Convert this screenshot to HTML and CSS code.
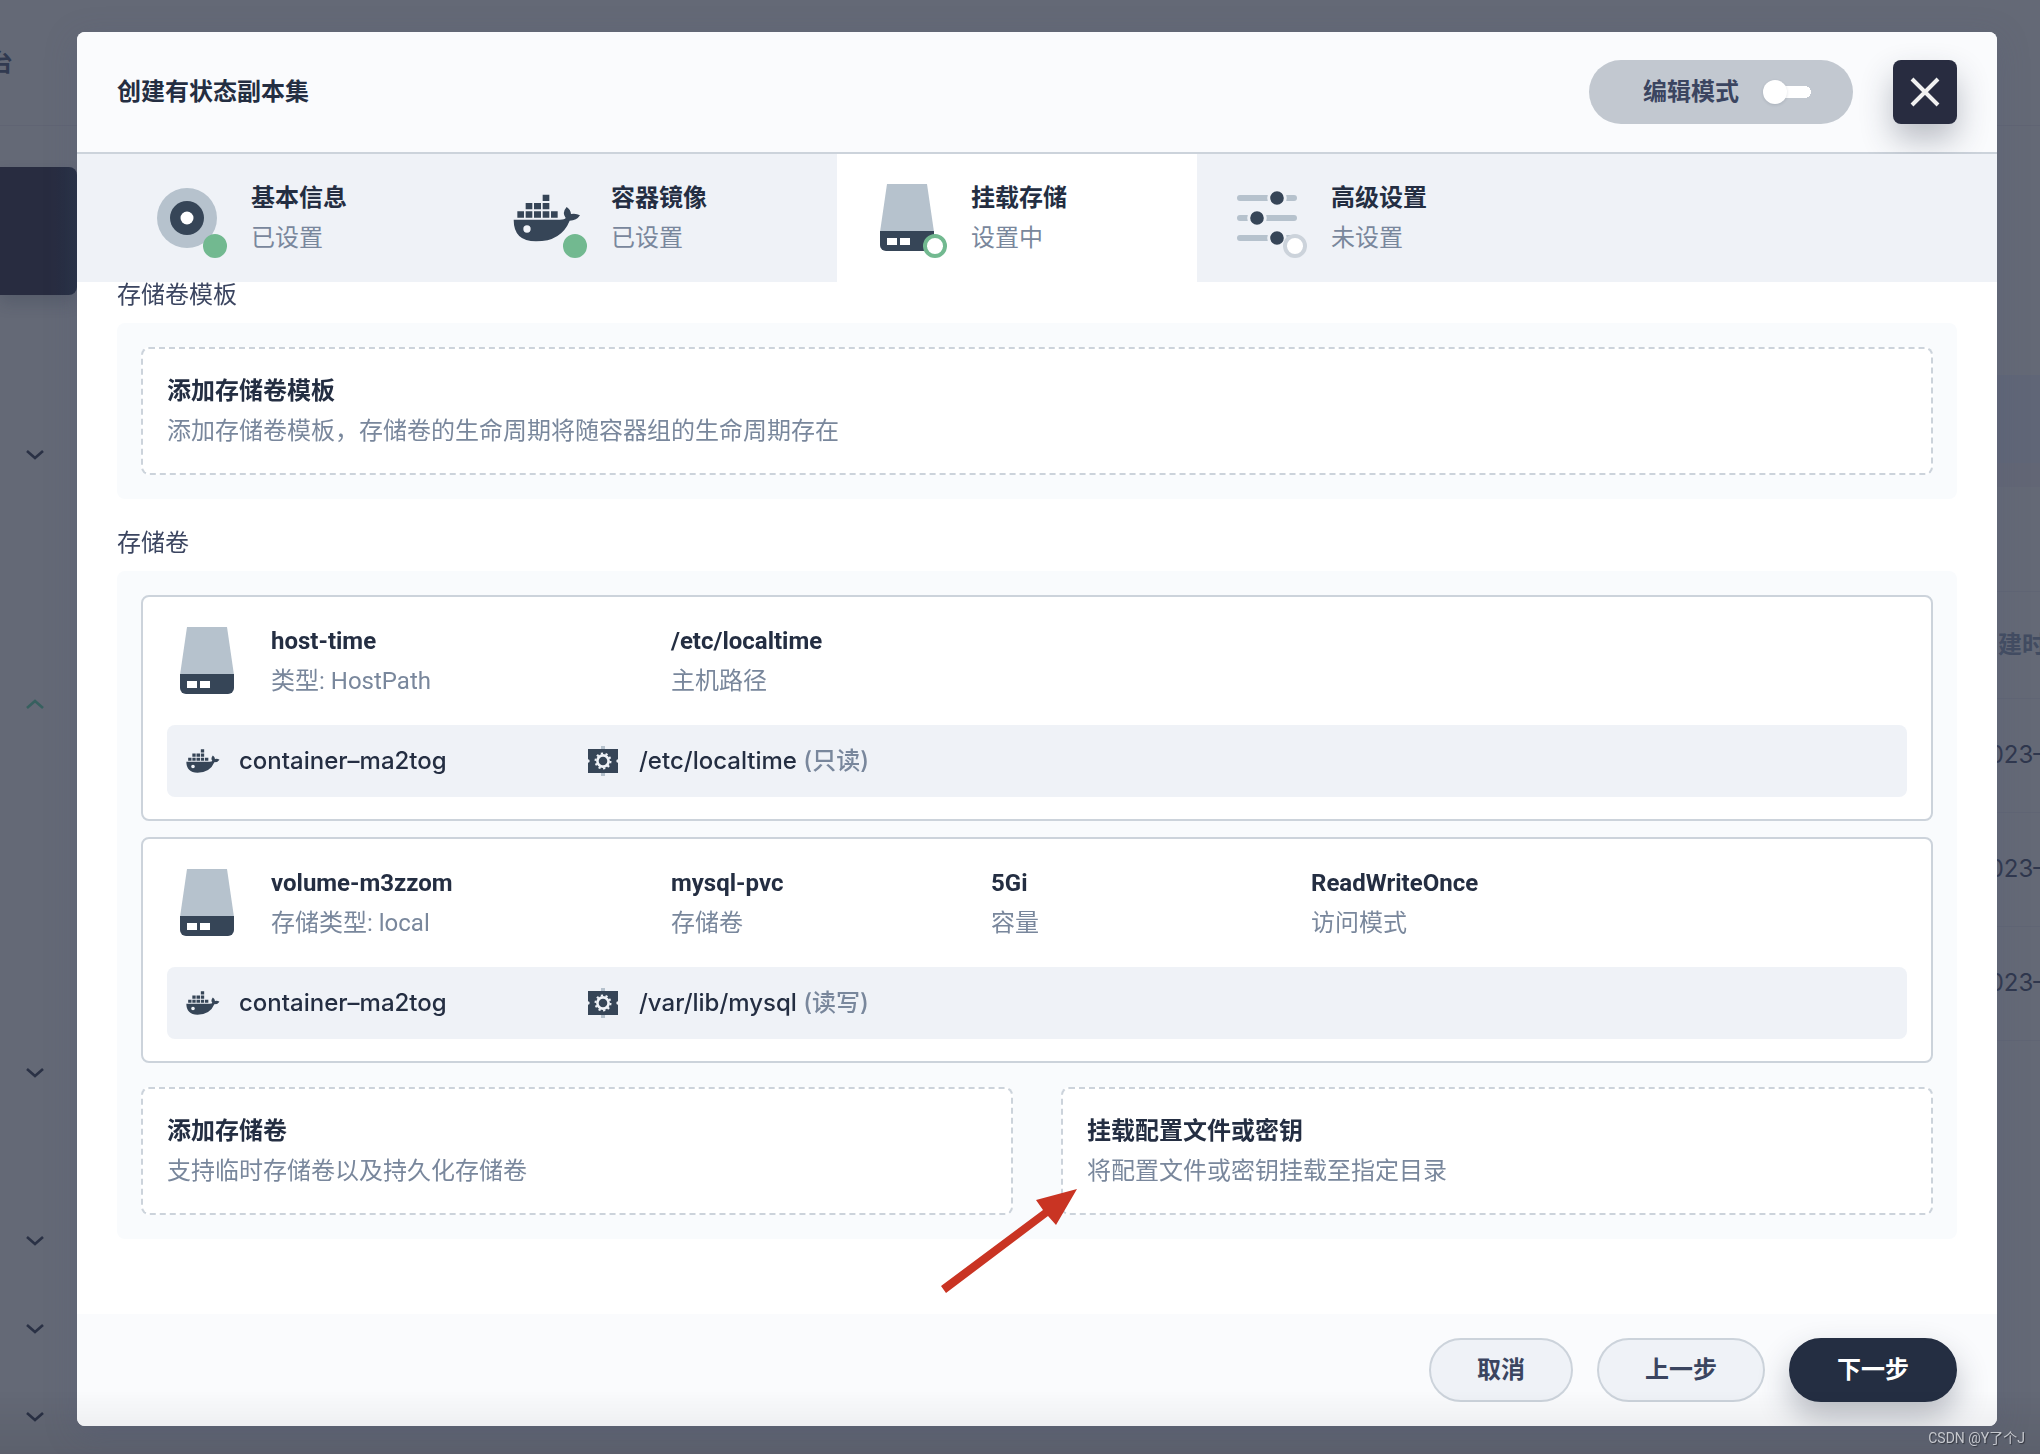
FILE: index.html
```html
<!DOCTYPE html>
<html lang="zh-CN">
<head>
<meta charset="utf-8">
<title>创建有状态副本集</title>
<link rel="stylesheet" href="styles.css">
</head>
<body>
<svg class="sprite" aria-hidden="true">
  <symbol id="icon-docker" viewBox="111 84 240 240">
    <path fill="#364557" fill-rule="evenodd" d="M131 209H270Q284 209 287 204Q275 188 290 171Q302 179 303 192Q318 189 330 196Q320 212 299 212Q274 274 198 274Q131 274 131 209ZM171 226a11 11 0 1 0 0 22a11 11 0 1 0 0-22Z"/>
    <path fill="#364557" d="M142 184h20v19h-20zM167 184h20v19h-20zM192 184h21v19h-21zM218 184h20v19h-20zM243 184h20v19h-20zM167 159h20v19h-20zM192 159h21v19h-21zM218 159h20v19h-20zM218 134h20v19h-20z"/>
  </symbol>
  <symbol id="icon-disk" viewBox="0 0 80 80">
    <path fill="#b6c2cd" d="M20 6h40l7 48H13z"/>
    <path fill="#364557" d="M13 53h54v14a6 6 0 0 1-6 6H19a6 6 0 0 1-6-6z"/>
    <path fill="#fff" d="M20 60h10v7H20zM33 60h10v7H33z"/>
  </symbol>
  <symbol id="icon-mount" viewBox="0 0 40 40">
    <path fill="#b6c2cd" d="M18 5h4v3h-4zM18 32h4v3h-4z"/>
    <path fill="#364557" d="M5 8h30v10.300a1.700 1.700 0 0 0 0 3.400V32H5V21.700a1.700 1.700 0 0 0 0-3.400z"/>
    <circle cx="20" cy="20" r="5.600" fill="none" stroke="#eff2f7" stroke-width="2.600"/>
    <circle cx="20" cy="20" r="7.500" fill="none" stroke="#eff2f7" stroke-width="2" stroke-dasharray="2.200 2.512"/>
  </symbol>
  <symbol id="icon-down" viewBox="0 0 18 10"><path fill="none" stroke="#2a3145" stroke-width="2.600" d="M1 1l8 7 8-7"/></symbol>
  <symbol id="icon-up" viewBox="0 0 18 10"><path fill="none" stroke="#37605f" stroke-width="2.600" d="M1 9l8-7 8 7"/></symbol>
</svg>

<div class="page" aria-hidden="true">
  <div class="topbar"><span>台</span></div>
  <div class="workspace">
    <div class="sidebar">
      <div class="project"></div>
      <div class="nav">
        <svg class="chevron"><use href="#icon-down"/></svg>
        <svg class="chevron"><use href="#icon-up"/></svg>
        <svg class="chevron"><use href="#icon-down"/></svg>
        <svg class="chevron"><use href="#icon-down"/></svg>
        <svg class="chevron"><use href="#icon-down"/></svg>
        <svg class="chevron"><use href="#icon-down"/></svg>
      </div>
    </div>
    <div class="listing">
      <div class="banner"></div>
      <div class="filter"></div>
      <table class="rows">
        <thead><tr><th>创建时间</th></tr></thead>
        <tbody>
          <tr><td>2023–</td></tr>
          <tr><td>2023–</td></tr>
          <tr><td>2023–</td></tr>
        </tbody>
      </table>
    </div>
  </div>
</div>

<div class="overlay">
  <div class="modal" role="dialog" aria-labelledby="modal-title">
    <header class="modal-header">
      <h1 id="modal-title">创建有状态副本集</h1>
      <label class="edit-mode" for="edit-mode">编辑模式
        <input class="switch" type="checkbox" role="switch" id="edit-mode">
      </label>
      <button class="close" type="button" aria-label="关闭">
        <svg width="32" height="32" viewBox="0 0 32 32"><path d="M3 3l26 26M29 3L3 29" stroke="#f1f1f1" stroke-width="4"/></svg>
      </button>
    </header>

    <nav class="tabs">
      <button class="tab" type="button">
        <span class="tab-icon">
          <svg viewBox="0 0 80 80"><circle cx="40" cy="40" r="30" fill="#b6c2cd"/><circle cx="40" cy="40" r="17" fill="#364557"/><circle cx="40" cy="40" r="6.500" fill="#fff"/></svg>
          <i class="dot done"></i>
        </span>
        <span class="pair"><strong>基本信息</strong><span>已设置</span></span>
      </button>
      <button class="tab" type="button">
        <span class="tab-icon"><svg><use href="#icon-docker"/></svg><i class="dot done"></i></span>
        <span class="pair"><strong>容器镜像</strong><span>已设置</span></span>
      </button>
      <button class="tab active" type="button">
        <span class="tab-icon"><svg><use href="#icon-disk"/></svg><i class="dot current"></i></span>
        <span class="pair"><strong>挂载存储</strong><span>设置中</span></span>
      </button>
      <button class="tab" type="button">
        <span class="tab-icon">
          <svg viewBox="0 0 80 80">
            <path d="M13 20H67M13 40H67M13 60H67" stroke="#b6c2cd" stroke-width="6" stroke-linecap="round"/>
            <g fill="#364557" stroke="#eff2f7" stroke-width="3"><circle cx="50" cy="20" r="8.300"/><circle cx="30" cy="40" r="8.300"/><circle cx="50" cy="60" r="8.300"/></g>
          </svg>
          <i class="dot"></i>
        </span>
        <span class="pair"><strong>高级设置</strong><span>未设置</span></span>
      </button>
    </nav>

    <main class="modal-body">
      <section class="group">
        <h2>存储卷模板</h2>
        <div class="panel">
          <button class="add pair" type="button"><strong>添加存储卷模板</strong><span>添加存储卷模板，存储卷的生命周期将随容器组的生命周期存在</span></button>
        </div>
      </section>

      <section class="group">
        <h2>存储卷</h2>
        <div class="panel">
          <article class="volume">
            <div class="info">
              <svg class="disk"><use href="#icon-disk"/></svg>
              <div class="pair name"><strong>host-time</strong><span>类型: HostPath</span></div>
              <div class="pair"><strong>/etc/localtime</strong><span>主机路径</span></div>
            </div>
            <div class="mount">
              <div class="mount-item"><svg><use href="#icon-docker"/></svg><span>container–ma2tog</span></div>
              <div class="mount-item"><svg><use href="#icon-mount"/></svg><span>/etc/localtime <em>(只读)</em></span></div>
            </div>
          </article>
          <article class="volume">
            <div class="info">
              <svg class="disk"><use href="#icon-disk"/></svg>
              <div class="pair name"><strong>volume-m3zzom</strong><span>存储类型: local</span></div>
              <div class="pair"><strong>mysql-pvc</strong><span>存储卷</span></div>
              <div class="pair"><strong>5Gi</strong><span>容量</span></div>
              <div class="pair"><strong>ReadWriteOnce</strong><span>访问模式</span></div>
            </div>
            <div class="mount">
              <div class="mount-item"><svg><use href="#icon-docker"/></svg><span>container–ma2tog</span></div>
              <div class="mount-item"><svg><use href="#icon-mount"/></svg><span>/var/lib/mysql <em>(读写)</em></span></div>
            </div>
          </article>
          <div class="choices">
            <button class="add pair" type="button"><strong>添加存储卷</strong><span>支持临时存储卷以及持久化存储卷</span></button>
            <div class="pointed">
              <button class="add pair" type="button"><strong>挂载配置文件或密钥</strong><span>将配置文件或密钥挂载至指定目录</span></button>
              <svg class="arrow" viewBox="0 0 136 104" aria-hidden="true"><path fill="#c93423" d="M136 0L95 11L102 21L0 97L5 104L107 27L115 36Z"/></svg>
            </div>
          </div>
        </div>
      </section>
    </main>

    <footer class="modal-footer">
      <button class="btn" type="button">取消</button>
      <button class="btn" type="button">上一步</button>
      <button class="btn primary" type="button">下一步</button>
    </footer>
  </div>
</div>
<div class="fade"></div>
<div class="watermark">CSDN @Y了个J</div>
</body>
</html>
```
FILE: styles.css
```css
* { box-sizing: border-box; }

body {
  margin: 0;
  min-height: 100vh;
  overflow: hidden;
  background: #646976;
  color: #242e42;
  font: 400 24px/40px Roboto, "Noto Sans CJK SC", sans-serif;
}

button { margin: 0; border: 0; font: inherit; color: inherit; text-align: left; cursor: pointer; }
h1, h2 { margin: 0; font-size: 24px; }
strong, h1 { font-weight: 700; }
em { font-style: normal; color: #79879c; }
.sprite { position: absolute; width: 0; height: 0; }

/* Dimmed page behind the dialog */
.page { height: 100vh; overflow: hidden; }
.topbar {
  display: flex;
  align-items: center;
  height: 126px;
  border-bottom: 1px solid #606473;
  color: #313a50;
  font-weight: 700;
}
.topbar span { width: 13px; display: flex; justify-content: flex-end; }
.workspace { display: grid; grid-template-columns: 77px 1fr; }
.sidebar { padding-top: 41px; }
.project {
  height: 128px;
  border-radius: 0 8px 8px 0;
  background: linear-gradient(90deg, #282c40 70%, #242e42);
  box-shadow: 0 8px 16px rgba(36, 46, 66, 0.2);
}
.nav {
  display: grid;
  grid-template-rows: 249px 369px 168px 88px 88px 10px;
  padding: 155px 0 0 26px;
}
.chevron { width: 18px; height: 10px; }
.listing { margin-top: 249px; }
.banner { height: 88px; background: #606677; }
.filter { height: 129px; border-top: 24px solid #626675; border-bottom: 1px solid #606574; }
.rows { width: 100%; border-collapse: collapse; }
.rows th, .rows td {
  height: 114px;
  padding: 0 0 0 1897px;
  border-bottom: 1px solid #606574;
  text-align: left;
  white-space: nowrap;
  max-width: 0;
  overflow: hidden;
  font-weight: 400;
  font-family: Inter, "Noto Sans CJK SC", sans-serif;
  color: #2f374d;
}
.rows th { height: 106px; font-weight: 700; color: #424c61; }

/* Dialog */
.overlay { position: fixed; inset: 0; display: flex; padding: 32px 43px 28px 77px; }
.modal {
  flex: 1;
  min-width: 0;
  display: flex;
  flex-direction: column;
  border-radius: 8px;
  background: #fff;
  box-shadow: 0 8px 32px rgba(80, 88, 125, 0.25);
  overflow: hidden;
}
.modal-header {
  display: flex;
  align-items: center;
  gap: 40px;
  padding: 28px 40px;
  border-bottom: 2px solid #ccd3db;
  background: #fafbfd;
}
.modal-header h1 { flex: 1; }
.edit-mode {
  display: flex;
  align-items: center;
  gap: 24px;
  height: 64px;
  padding: 0 42px 0 54px;
  border-radius: 32px;
  background: #c2c8d0;
  color: #3b4560;
  font-weight: 700;
}
.switch {
  appearance: none;
  display: flex;
  align-items: center;
  width: 48px;
  height: 24px;
  margin: 0;
  background:
    radial-gradient(circle at 42px 12px, #fff 6px, transparent 6px),
    linear-gradient(#fff, #fff) 12px 50% / 30px 12px no-repeat;
}
.switch::before {
  content: "";
  width: 24px;
  height: 24px;
  border-radius: 50%;
  background: #fff;
  box-shadow: 0 1px 3px rgba(36, 46, 66, 0.15);
}
.close {
  display: flex;
  align-items: center;
  justify-content: center;
  width: 64px;
  height: 64px;
  padding: 0;
  border-radius: 8px;
  background: #282c40;
  box-shadow: 0 16px 32px rgba(36, 46, 66, 0.3);
}

.tabs { display: flex; padding: 0 40px; background: #eff2f7; }
.tab {
  display: flex;
  align-items: center;
  gap: 24px;
  width: 360px;
  height: 128px;
  padding: 0 30px;
  background: none;
}
.tab.active { background: #fff; }
.tab-icon { position: relative; width: 80px; height: 80px; }
.tab-icon svg { display: block; width: 80px; height: 80px; }
.dot {
  position: absolute;
  right: 0;
  bottom: 0;
  width: 24px;
  height: 24px;
  border: 4px solid #ccd3db;
  border-radius: 50%;
  background: #fff;
}
.dot.current { border-color: #72b990; }
.dot.done { border-color: #72b990; background: #72b990; }

.pair { display: flex; flex-direction: column; }
.pair span { color: #79879c; }

.modal-body {
  flex: 1;
  min-height: 0;
  display: flex;
  flex-direction: column;
  gap: 32px;
  padding: 1px 40px 0;
  overflow: hidden;
}
.group { display: flex; flex-direction: column; gap: 16px; }
.group h2 { line-height: 24px; font-weight: 400; color: #3b4560; }
.panel {
  display: flex;
  flex-direction: column;
  gap: 16px;
  padding: 24px;
  border-radius: 8px;
  background: #f9fbfd;
}
.add {
  width: 100%;
  padding: 22px 24px;
  border: 2px dashed #ccd3db;
  border-radius: 8px;
  background: #fff;
}
.volume {
  display: flex;
  flex-direction: column;
  gap: 24px;
  padding: 24px 24px 22px;
  border: 2px solid #ccd3db;
  border-radius: 8px;
  background: #fff;
}
.info { display: flex; }
.info .pair { width: 320px; }
.info .name { width: 400px; }
.disk { width: 80px; height: 80px; margin-right: 24px; }
.mount {
  display: flex;
  padding: 16px;
  border-radius: 8px;
  background: #eff2f7;
  font-family: Inter, "Noto Sans CJK SC", sans-serif;
  font-weight: 500;
}
.mount-item { display: flex; gap: 16px; width: 400px; }
.mount-item svg { width: 40px; height: 40px; }
.choices { display: grid; grid-template-columns: 1fr 1fr; gap: 48px; padding-top: 8px; }
.pointed { position: relative; }
.arrow { position: absolute; left: -120px; top: 102px; width: 136px; height: 104px; }

.modal-footer {
  display: flex;
  justify-content: flex-end;
  gap: 24px;
  padding: 24px 40px;
  background: #fafbfd;
}
.btn {
  height: 64px;
  padding: 0 46px;
  border: 2px solid #ccd3db;
  border-radius: 32px;
  background: #eff2f7;
  color: #3b4560;
  font-weight: 700;
}
.btn.primary {
  border-color: #242e42;
  background: #242e42;
  color: #fff;
  box-shadow: 0 16px 32px rgba(36, 46, 66, 0.3);
}

.fade {
  position: fixed;
  inset: auto 0 0;
  height: 64px;
  background: linear-gradient(rgba(0, 0, 0, 0), rgba(0, 0, 0, 0.08));
  pointer-events: none;
}
.watermark {
  position: fixed;
  right: 15px;
  bottom: 6px;
  color: #c6c8ce;
  font-size: 14px;
  line-height: 20px;
  text-shadow: 1px 1px 1px #33363f;
}
```
